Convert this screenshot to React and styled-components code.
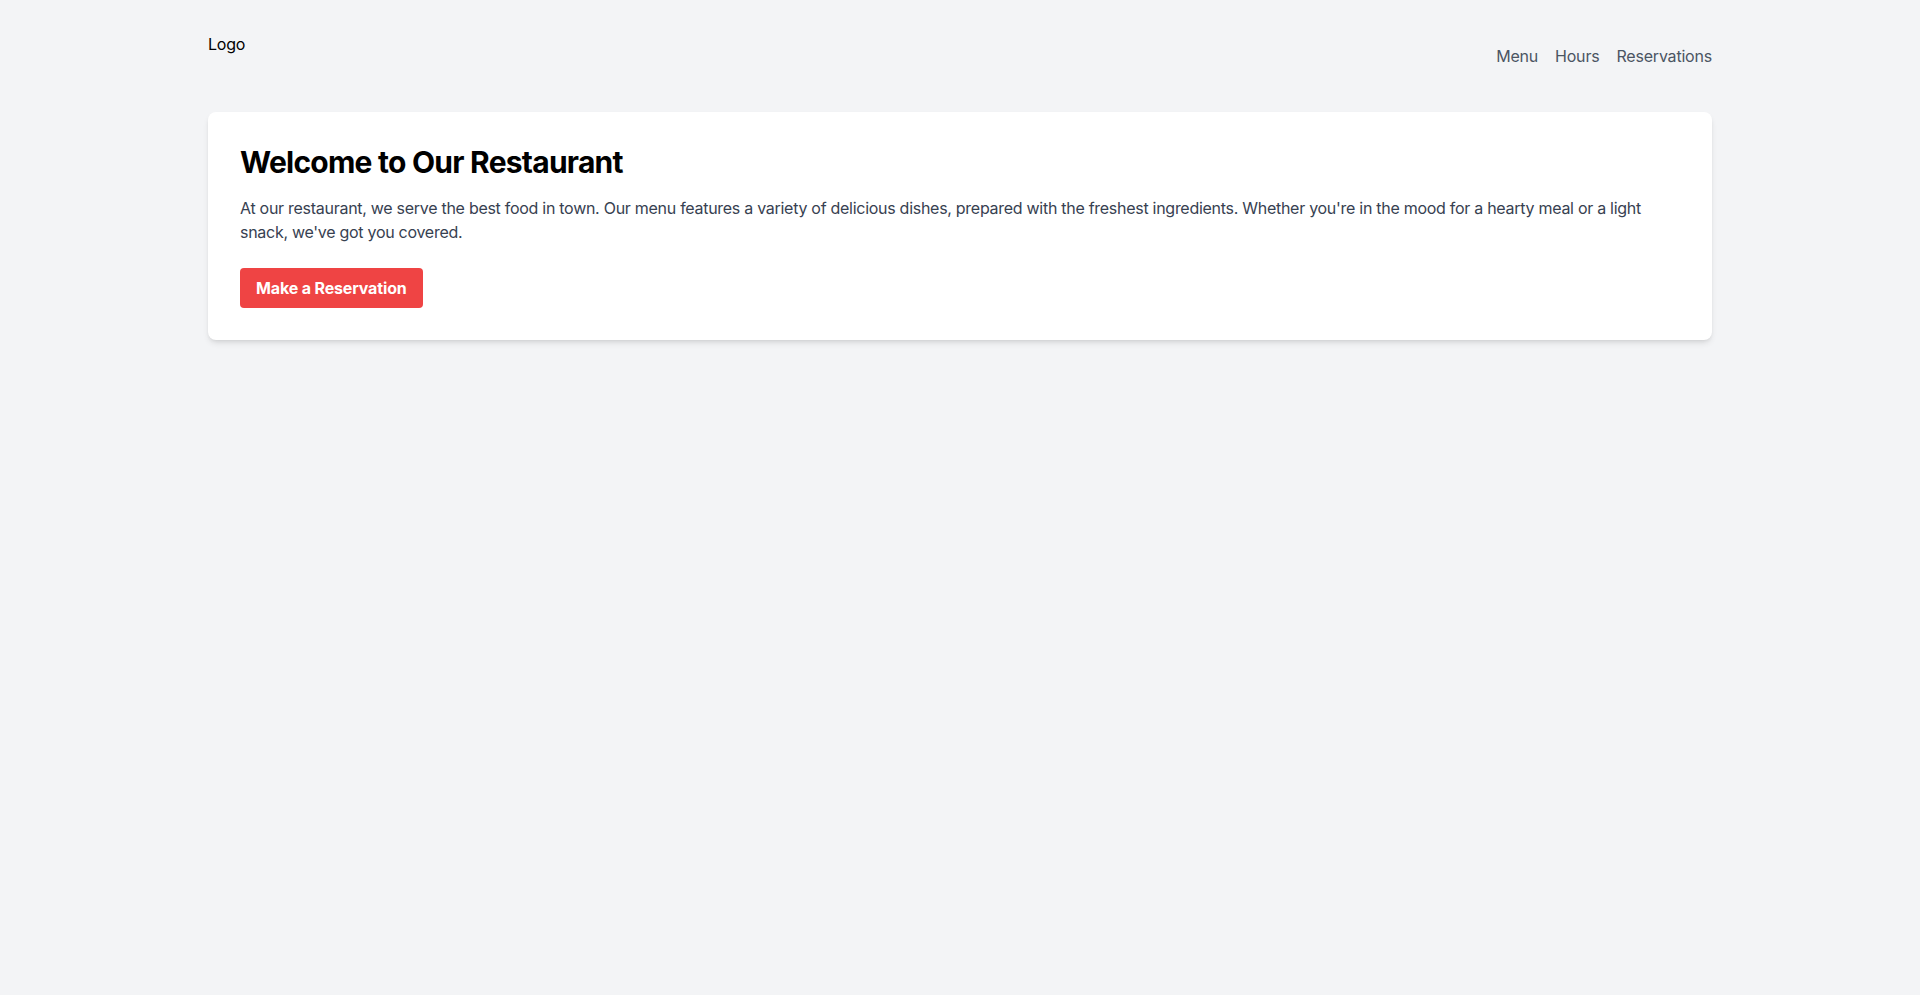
import React from 'react'
import styled, {createGlobalStyle} from 'styled-components'

const GlobalStyle = createGlobalStyle`
  * {
    box-sizing: border-box;
  }
  body {
    margin: 0;
    background: #f3f4f6;
    font-family: Inter, "Liberation Sans", sans-serif;
    color: #000;
  }
`

const Page = styled.div`
  min-height: 100vh;
  background: #f3f4f6;
`

const Container = styled.div`
  max-width: 1536px;
  margin: 0 auto;
  padding: 32px 16px;
`

const Header = styled.header`
  display: flex;
  justify-content: space-between;
  align-items: flex-start;
  margin-bottom: 32px;
`

const Logo = styled.div`
  font-size: 16px;
  line-height: 24px;
  color: #000;
  letter-spacing: -0.2px;
`

const Nav = styled.nav`
  display: flex;
  gap: 17px;
  padding: 12px 0;
`

const NavLink = styled.a`
  font-size: 16px;
  line-height: 24px;
  color: #4b5563;
  letter-spacing: -0.2px;
  text-decoration: none;
  cursor: pointer;
`

const Card = styled.section`
  background: #fff;
  border-radius: 8px;
  padding: 32px;
  box-shadow: 0 4px 6px -1px rgba(0, 0, 0, 0.1), 0 2px 4px -2px rgba(0, 0, 0, 0.1);
`

const Title = styled.h1`
  margin: 0 0 16px;
  font-size: 30px;
  line-height: 36px;
  font-weight: 700;
  letter-spacing: -0.75px;
  color: #000;
`

const Text = styled.p`
  margin: 0 0 24px;
  font-size: 16px;
  line-height: 24px;
  letter-spacing: -0.28px;
  color: #374151;
`

const Button = styled.button`
  display: inline-block;
  height: 40px;
  padding: 0 16px;
  border: none;
  border-radius: 4px;
  background: #ef4444;
  color: #fff;
  font-family: inherit;
  font-size: 16px;
  font-weight: 700;
  letter-spacing: -0.15px;
  cursor: pointer;
`

const links = ['Menu', 'Hours', 'Reservations']

function App () {
  return (
    <Page>
      <GlobalStyle />
      <Container>
        <Header>
          <Logo>Logo</Logo>
          <Nav>
            {links.map(link => (
              <NavLink key={link}>{link}</NavLink>
            ))}
          </Nav>
        </Header>
        <Card>
          <Title>Welcome to Our Restaurant</Title>
          <Text>
            At our restaurant, we serve the best food in town. Our menu features a variety of delicious dishes, prepared with the freshest ingredients. Whether you're in the mood for a hearty meal or a light snack, we've got you covered.
          </Text>
          <Button>Make a Reservation</Button>
        </Card>
      </Container>
    </Page>
  )
}

export default App
